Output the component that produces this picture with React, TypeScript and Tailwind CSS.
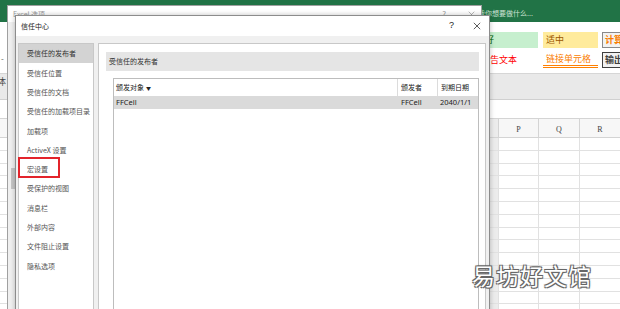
import React from "react";

const navItems = [
  "受信任的发布者",
  "受信任位置",
  "受信任的文档",
  "受信任的加载项目录",
  "加载项",
  "ActiveX 设置",
  "宏设置",
  "受保护的视图",
  "消息栏",
  "外部内容",
  "文件阻止设置",
  "隐私选项",
];

function XIcon({ className }: { className?: string }) {
  return (
    <svg viewBox="0 0 10 10" className={className} fill="none" stroke="currentColor" strokeWidth="1">
      <path d="M1 1 L9 9 M9 1 L1 9" />
    </svg>
  );
}

export default function App() {
  const rows = Array.from({ length: 14 });
  return (
    <div className="relative w-[620px] h-[309px] overflow-hidden bg-white font-['Noto_Sans_CJK_SC','Noto_Sans',sans-serif]">
      {/* Excel background */}
      <div className="flex flex-col h-full">
        <div className="h-[22px] shrink-0 bg-[#217346] flex items-start">
          <span className="ml-[464px] mt-[9px] text-[7px] leading-[9px] text-[#cde3d5] whitespace-nowrap">
            告诉我你想要做什么...
          </span>
        </div>
        <div className="h-[51px] shrink-0 bg-white flex">
          <div className="w-[478px] shrink-0 flex flex-col">
            <span className="mt-[33px] ml-[1px] text-[8px] leading-[8px] text-[#555]">-</span>
          </div>
          <div className="flex flex-col pt-[10px] gap-[4px]">
            <div className="flex h-[16px] gap-[5px]">
              <div className="w-[60px] bg-[#c6efce] text-[#006100] text-[9px] leading-[16px] pl-[7px]">好</div>
              <div className="w-[55px] bg-[#ffeb9c] text-[#9c5700] text-[9px] leading-[16px] pl-[3px]">适中</div>
              <div className="w-[40px] ml-[-1px] bg-[#f2f2f2] border border-[#8a8a8a] text-[#fa7d00] font-bold text-[9px] leading-[14px] pl-[2px]">计算</div>
            </div>
            <div className="flex h-[16px] gap-[5px]">
              <div className="w-[60px] text-[#ff0000] text-[9px] leading-[16px] pl-[3px] whitespace-nowrap">警告文本</div>
              <div className="w-[55px] text-[#fa7d00] text-[9px] leading-[13px] pl-[3px] border-b-[3px] border-double border-[#ff8001] whitespace-nowrap">链接单元格</div>
              <div className="w-[40px] ml-[-1px] bg-[#f2f2f2] border border-[#3f3f3f] text-[#3f3f3f] font-bold text-[9px] leading-[14px] pl-[2px]">输出</div>
            </div>
          </div>
        </div>
        <div className="h-[26px] shrink-0 bg-[#e9e9e9] border-t border-[#d6d6d6] flex items-start">
          <span className="ml-[-3px] mt-[3px] text-[9px] leading-[10px] text-[#444]">体</span>
        </div>
        <div className="h-[19px] shrink-0 bg-white border-t border-[#d0d0d0]" />
        <div className="h-[20px] shrink-0 bg-[#f7f7f7] border-t border-b border-[#d4d4d4] flex font-['Liberation_Serif',serif] text-[8px] text-[#444]">
          <div className="w-[490px] shrink-0" />
          <div className="w-[8px] shrink-0 bg-[#ececec]" />
          <div className="w-[40px] shrink-0 border-l border-[#d4d4d4] flex items-center justify-center pt-[3px]">P</div>
          <div className="w-[41px] shrink-0 border-l border-[#d4d4d4] flex items-center justify-center pt-[3px]">Q</div>
          <div className="w-[41px] shrink-0 border-l border-[#d4d4d4] flex items-center justify-center pt-[3px]">R</div>
        </div>
        {rows.map((_, i) => (
          <div key={i} className="h-[12.8px] shrink-0 border-b border-[#e1e1e1] flex">
            <div className="w-[490px] shrink-0" />
            <div className="w-[8px] shrink-0 bg-[#ececec]" />
            <div className="w-[40px] shrink-0 border-l border-[#e1e1e1]" />
            <div className="w-[41px] shrink-0 border-l border-[#e1e1e1]" />
            <div className="w-[41px] shrink-0 border-l border-[#e1e1e1]" />
          </div>
        ))}
      </div>

      {/* Back dialog: Excel 选项 */}
      <div className="absolute left-[7px] top-[5px] w-[475px] h-[320px] bg-[#f0f0f0] border border-[#a0a0a0] flex flex-col">
        <div className="h-[16px] bg-white flex items-center text-[#9a9a9a] text-[7px]">
          <span className="ml-[5px]">Excel 选项</span>
          <span className="ml-auto mr-[22px] text-[8px]">?</span>
          <XIcon className="w-[7px] h-[7px] mr-[6px]" />
        </div>
        <div className="flex">
          <div className="ml-[3px] w-[5px] flex flex-col">
            <div className="mt-[146px] h-[21px] w-[4px] bg-[#c6c6c6]" />
          </div>
        </div>
      </div>

      {/* Front dialog: 信任中心 */}
      <div className="absolute left-[15px] top-[15px] w-[475px] h-[300px] bg-[#f0f0f0] border border-[#8c8c8c] shadow-[0_0_5px_rgba(0,0,0,0.25)] flex flex-col">
        <div className="h-[20px] shrink-0 bg-white flex items-center text-[#222]">
          <span className="ml-[5px] text-[7px]">信任中心</span>
          <span className="ml-auto mr-[19px] text-[9px] font-['Liberation_Sans',sans-serif]">?</span>
          <XIcon className="w-[8px] h-[8px] mr-[8px] text-[#333]" />
        </div>
        <div className="flex flex-1 pt-[7px] pl-[2px] gap-[4px]">
          <div className="w-[76px] shrink-0 bg-white border border-[#c8c8c8] flex flex-col text-[7px] text-[#555]">
            {navItems.map((t, i) => (
              <div
                key={t}
                className={`relative h-[19.3px] shrink-0 flex items-center pl-[8px] whitespace-nowrap ${
                  i === 0 ? "bg-[#d3d3d3] text-[#333]" : ""
                }`}
              >
                {t}
                {t === "宏设置" && (
                  <div className="absolute left-[-1px] top-[-3px] w-[42px] h-[21px] border-2 border-[#e3242b]" />
                )}
              </div>
            ))}
          </div>
          <div className="w-[388px] shrink-0 bg-white border border-[#c8c8c8] flex flex-col pt-[8px] pl-[7px]">
            <div className="w-[373px] h-[19px] bg-[#e5e5e5] flex items-center pl-[3px] text-[7px] text-[#333]">
              受信任的发布者
            </div>
            <div className="mt-[7px] ml-[7px] w-[366px] flex-1 border border-[#bdbdbd] flex flex-col text-[7px] text-[#222]">
              <div className="h-[17px] flex shrink-0">
                <div className="w-[283px] flex items-center pl-[2px]">
                  颁发对象
                  <span className="ml-[2px] text-[5px]">▼</span>
                </div>
                <div className="w-[40px] border-l border-[#dcdcdc] flex items-center pl-[3px]">颁发者</div>
                <div className="flex-1 border-l border-[#dcdcdc] flex items-center pl-[3px]">到期日期</div>
              </div>
              <div className="h-[13px] bg-[#dadada] flex shrink-0 font-['Noto_Sans',sans-serif] text-[7.5px]">
                <div className="w-[283px] flex items-center pl-[2px]">FFCell</div>
                <div className="w-[40px] flex items-center pl-[4px]">FFCell</div>
                <div className="flex-1 flex items-center pl-[3px]">2040/1/1</div>
              </div>
            </div>
          </div>
        </div>
      </div>

      {/* Watermark */}
      <div className="absolute left-[472px] top-[260px] text-[23px] leading-[30px] text-white tracking-[1px] [text-shadow:-1px_-1px_0_#666,1px_-1px_0_#666,-1px_1px_0_#666,1px_1px_0_#666,0_0_3px_rgba(0,0,0,0.3)]">
        易坊好文馆
      </div>
    </div>
  );
}
